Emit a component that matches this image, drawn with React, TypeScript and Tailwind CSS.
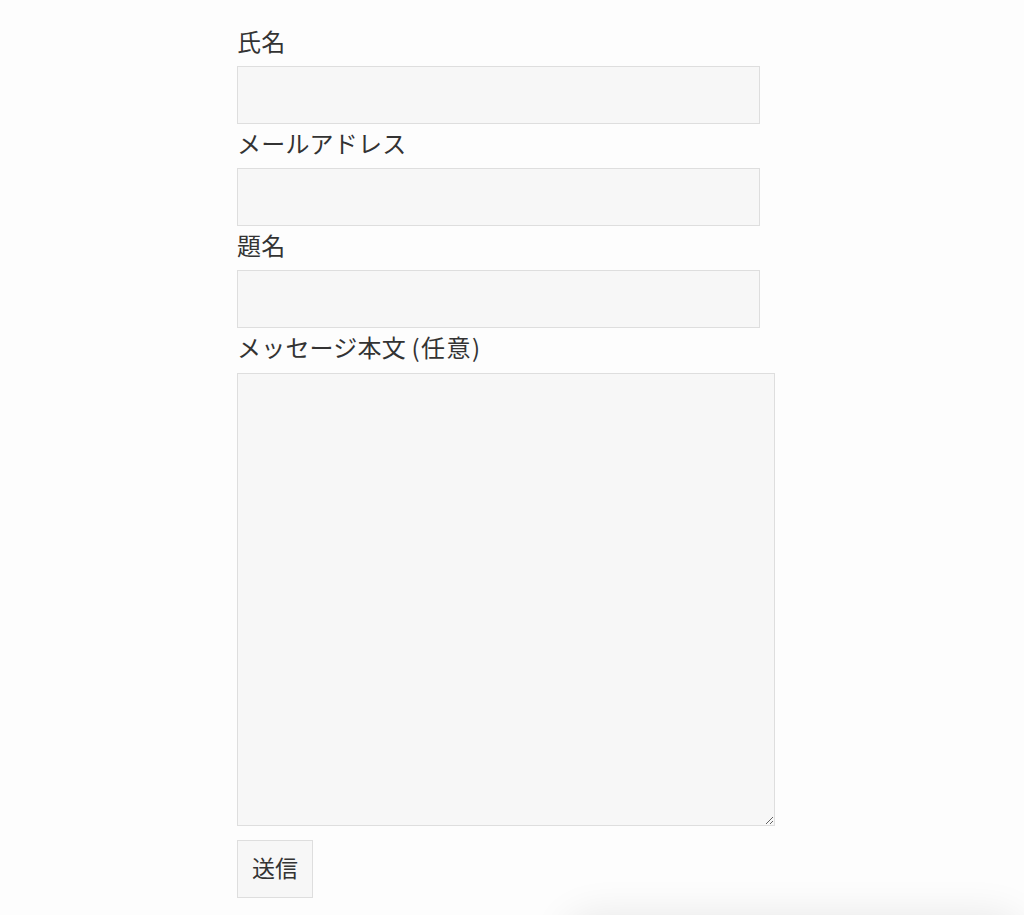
import { useState } from 'react';

function App() {
  const [form, setForm] = useState({ name: '', email: '', subject: '', message: '' });

  const update = (key: keyof typeof form) => (e: React.ChangeEvent<HTMLInputElement | HTMLTextAreaElement>) =>
    setForm({ ...form, [key]: e.target.value });

  const labelClass = 'block text-[24px] leading-[38px] pb-[6px] tracking-[0.2px]';
  const fieldClass =
    'block w-[523px] h-[58px] bg-[#f7f7f7] border border-[#dedede] px-3 text-[18px] text-[#333] outline-none';

  return (
    <div
      className="min-h-screen bg-[#fdfdfd] text-[#333] overflow-hidden"
      style={{ fontFamily: '"Noto Sans CJK JP", "Noto Sans", sans-serif' }}
    >
      <form className="w-[550px] mx-auto pt-[22px]" onSubmit={(e) => e.preventDefault()}>
        <label className="block">
          <span className={labelClass}>氏名</span>
          <input type="text" value={form.name} onChange={update('name')} className={fieldClass} />
        </label>
        <label className="block">
          <span className={labelClass}>メールアドレス</span>
          <input type="email" value={form.email} onChange={update('email')} className={fieldClass} />
        </label>
        <label className="block">
          <span className={labelClass}>題名</span>
          <input type="text" value={form.subject} onChange={update('subject')} className={fieldClass} />
        </label>
        <label className="block">
          <span className={labelClass}>
            メッセージ本文 <span className="tracking-[1.5px]">(任意)</span>
          </span>
          <textarea
            value={form.message}
            onChange={update('message')}
            className="block mt-px w-[538px] h-[453px] bg-[#f7f7f7] border border-[#dedede] p-3 text-[18px] text-[#333] outline-none resize"
          />
        </label>
        <button
          type="submit"
          className="mt-[14px] h-[58px] px-[14px] pb-[4px] bg-[#f7f7f7] border border-[#dedede] text-[23px] text-[#333]"
        >
          送信
        </button>
      </form>

      <div className="fixed right-0 bottom-[-60px] w-[460px] h-[60px] rounded-[40px] bg-white shadow-[0_0_40px_rgba(0,0,0,0.09)]" />
    </div>
  );
}

export default App;
